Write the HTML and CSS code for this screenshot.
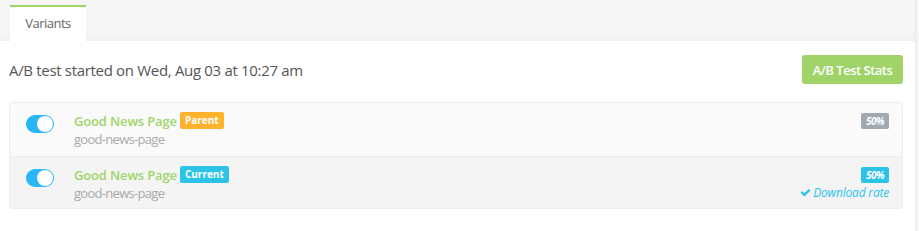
FILE: index.html
```html
<!DOCTYPE html>
<html>
<head>
<meta charset="utf-8">
<link rel="stylesheet" href="styles.css">
</head>
<body>
<div class="page">
  <div class="tabs">
    <div class="tab">Variants</div>
  </div>
  <div class="content">
    <div class="header">
      <div class="started">A/B test started on Wed, Aug 03 at 10:27 am</div>
      <button class="stats-btn">A/B Test Stats</button>
    </div>
    <div class="list">
      <div class="row">
        <div class="toggle"><span class="knob"></span></div>
        <div class="info">
          <div class="title-line"><span class="title">Good News Page</span><span class="label label-parent">Parent</span></div>
          <div class="slug">good-news-page</div>
        </div>
        <div class="right">
          <span class="pct pct-gray">50%</span>
        </div>
      </div>
      <div class="row row-alt">
        <div class="toggle"><span class="knob"></span></div>
        <div class="info">
          <div class="title-line"><span class="title">Good News Page</span><span class="label label-current">Current</span></div>
          <div class="slug">good-news-page</div>
        </div>
        <div class="right">
          <span class="pct pct-blue">50%</span>
          <span class="rate"><svg class="check" viewBox="0 0 1792 1792" width="11" height="11"><path d="M1671 566q0 40-28 68l-724 724-136 136q-28 28-68 28t-68-28l-136-136-362-362q-28-28-28-68t28-68l136-136q28-28 68-28t68 28l294 295 656-657q28-28 68-28t68 28l136 136q28 28 28 68z" fill="currentColor"/></svg>Download rate</span>
        </div>
      </div>
    </div>
  </div>
</div>
</body>
</html>
```

FILE: styles.css
```css
html, body {
  margin: 0;
  padding: 0;
  background: #f5f5f5;
}
body {
  font-family: "Open Sans", "Liberation Sans", sans-serif;
  color: #555;
}
.page {
  width: 916px;
  height: 231px;
  background: #fff;
  border-right: 1px solid #e8e8e8;
  box-sizing: border-box;
}
.tabs {
  height: 41px;
  background: linear-gradient(#f5f5f5, #f5f5f5 85%, #efefef);
  padding-left: 10px;
  padding-top: 5px;
  box-sizing: border-box;
  display: flex;
}
.tab {
  width: 76px;
  height: 36px;
  background: #fff;
  border-top: 2px solid #a0d468;
  box-sizing: border-box;
  font-size: 13px;
  letter-spacing: -0.5px;
  color: #666;
  text-align: center;
  line-height: 33px;
}
.content {
  padding: 14px 12px 0 9px;
}
.header {
  display: flex;
  justify-content: space-between;
  align-items: center;
  height: 29px;
}
.started {
  font-size: 15px;
  letter-spacing: -0.32px;
  color: #555;
}
.stats-btn {
  width: 101px;
  height: 29px;
  border: none;
  border-radius: 3px;
  background: #a0d468;
  color: #fff;
  font-family: "Open Sans", "Liberation Sans", sans-serif;
  font-weight: 600;
  font-size: 13px;
  letter-spacing: -0.5px;
  padding: 0;
}
.list {
  margin-top: 18px;
  border: 1px solid #eee;
  border-radius: 3px;
  background: #fafafa;
}
.row {
  display: flex;
  align-items: flex-start;
  height: 53px;
  box-sizing: border-box;
  padding: 0 13px 0 16px;
}
.row-alt {
  background: #f4f4f4;
  border-top: 1px solid #eee;
  height: 52px;
}
.toggle {
  width: 28px;
  height: 18px;
  border-radius: 9px;
  background: #29b6f6;
  margin-top: 12px;
  position: relative;
  flex: none;
}
.knob {
  position: absolute;
  right: 1px;
  top: 1px;
  width: 16px;
  height: 16px;
  border-radius: 50%;
  background: #fff;
}
.info {
  margin-left: 20px;
  padding-top: 8px;
  flex: 1;
}
.title-line {
  display: flex;
  align-items: center;
  height: 19px;
}
.title {
  font-size: 13px;
  font-weight: 600;
  letter-spacing: -0.15px;
  color: #a0d468;
}
.label {
  margin-left: 3px;
  color: #fff;
  font-weight: 700;
  font-size: 10px;
  height: 17px;
  line-height: 17px;
  padding: 0 5px;
  border-radius: 2px;
}
.label-parent { background: #ffb22b; }
.label-current { background: #2dc3e8; }
.slug {
  font-size: 13px;
  letter-spacing: -0.7px;
  color: #aaa;
  line-height: 18px;
}
.right {
  display: flex;
  flex-direction: column;
  align-items: flex-end;
  padding-top: 10px;
}
.pct {
  display: inline-block;
  width: 28px;
  height: 16px;
  line-height: 16px;
  text-align: center;
  font-size: 10px;
  font-weight: 700;
  font-style: italic;
  letter-spacing: -0.5px;
  color: #fff;
  border-radius: 2px;
}
.pct-gray { background: #a0a8b2; }
.pct-blue { background: #2dc3e8; }
.rate {
  font-size: 12px;
  font-style: italic;
  letter-spacing: -0.2px;
  color: #2dc3e8;
  margin-top: 1px;
  display: flex;
  align-items: center;
}
.check {
  margin-right: 2px;
}
```
